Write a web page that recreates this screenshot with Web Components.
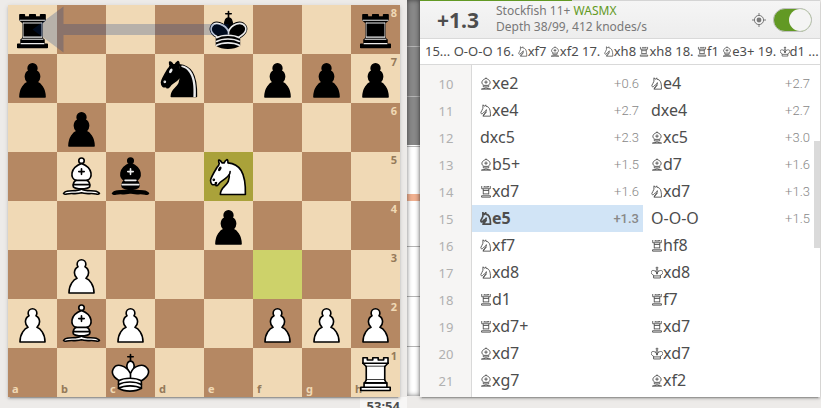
<!DOCTYPE html>
<html lang="en">
<head>
<meta charset="utf-8">
<meta name="viewport" content="width=device-width, initial-scale=1">
<title>Analysis board</title>
<style>
    html, body {
        margin: 0;
        height: 100%;
        overflow: hidden;
    }

    body {
        background: #edebe9;
        color: #4d4d4d;
        font-family: "Noto Sans", "DejaVu Sans", sans-serif;
    }
</style>
</head>
<body>
<analysis-page>
    <chess-board position="r3k2r/p2n1ppp/1p6/1Bb1N3/4p3/1P6/PBP2PPP/2K4R" origin="f3" target="e5" arrow="e8a8"></chess-board>
    <eval-gauge slot="gauge"></eval-gauge>
    <section slot="tools" aria-label="Analysis">
        <engine-header score="+1.3">
            Stockfish 11+ <span slot="tech">WASMX</span>
            <span slot="info">Depth 38/99, 412 knodes/s</span>
        </engine-header>
        <engine-line>15... O-O-O 16. Nxf7 Bxf2 17. Nxh8 Rxh8 18. Rf1 Be3+ 19. Kd1 ...</engine-line>
        <move-list current="15"></move-list>
    </section>
    <chess-clock slot="clock">53:54</chess-clock>
</analysis-page>

<script>
// Small line drawings of the pieces, used inside move text
const FIGURINES = {
    K: { name: 'King', path: 'M22.5 14V5M18.5 8.500h8M22.500 27c0-4 3-7 3-10 0-2-1-3.500-3-3.500s-3 1.500-3 3.500c0 3 3 6 3 10M12.500 38h20v-8c8-4 8-9 6-12-4-4-13-2-16 8-3-10-12-12-16-8-2 3-2 8 6 12zM12.500 32h20' },
    R: { name: 'Rook', path: 'M10 6v8h25V6M15 9h4V6M19 9h7V6M26 9h4V6M14.500 14v16M30.500 14v16M14 19h17M14 29h17M9.500 38.500h26v-4h-26z' },
    B: { name: 'Bishop', path: 'M22.500 4.500v3M16 27c-6-3-7-9-4-13 2-3 6-5 10.500-7 4.500 2 8.500 4 10.500 7 3 4 2 10-4 13M22.500 13v10M17.500 18h10M15 27.500h15M15 32h15l1-4M15 32l-1-4M9 38.500c5-3 10 0 13.500-4 3.500 4 8.500 1 13.500 4z' },
    N: { name: 'Knight', path: 'M22 9.500c10 1 14 9 13.500 29H14c0-9 10-8 9.500-19-1 4-4 6-8 8l-4 4c-3 1-4-1-4-4 2-4 4-7 6-12l0-10 5 4 3-4 1 4M14 38.500L24 26' }
};

// Swap piece letters for figurines, "O-O-O" stays as it is
function figurine(san) {
    return san.replace(/[KRBN]/g, letter => {
        const { name, path } = FIGURINES[letter];
        return `<svg class="fig" viewBox="5 3 35 38" role="img" aria-label="${name}"><path d="${path}"/></svg>`;
    });
}

const figurineStyle = `
    .fig {
        width: 12px;
        height: 13px;
        vertical-align: -1px;
        fill: none;
        stroke: currentColor;
        stroke-width: 2.6;
    }
`;

class AnalysisPage extends HTMLElement {
    constructor() {
        super();
        this.attachShadow({ mode: 'open' }).innerHTML = `
            <style>
                :host {
                    display: grid;
                    grid-template-columns: minmax(0, 49fr) 7px 13px minmax(0, 50fr);
                    padding: 0 1px 0 8px;
                }
                .board { padding-top: 5px; }
                .gauge { grid-column: 3; display: grid; padding-bottom: 1px; }
                .tools {
                    border-top: 1px solid #c4cbb9;
                    border-image: linear-gradient(90deg, #629924 38%, #d4d4d4 38%) 1;
                    background: #fff;
                    box-shadow: 0 2px 2px rgba(0,0,0,.14), 0 3px 1px -2px rgba(0,0,0,.2), 0 1px 5px rgba(0,0,0,.12);
                    z-index: 1;
                }
                .clock { grid-column: 1 / 3; justify-self: end; }
            </style>
            <main class="board"><slot></slot></main>
            <div class="gauge"><slot name="gauge"></slot></div>
            <div class="tools"><slot name="tools"></slot></div>
            <div class="clock"><slot name="clock"></slot></div>
        `;
    }
}

const PIECES = {
    P: `<path fill="#fff" stroke-linecap="round" d="M22.5 9c-2.21 0-4 1.79-4 4 0 .89.29 1.71.78 2.38C17.33 16.5 16 18.59 16 21c0 2.03.94 3.84 2.41 5.03-3 1.06-7.41 5.55-7.41 13.47h23c0-7.92-4.41-12.41-7.41-13.47 1.47-1.19 2.41-3 2.41-5.03 0-2.41-1.33-4.5-3.28-5.62.49-.67.78-1.49.78-2.38 0-2.21-1.79-4-4-4z"/>`,
    N: `<path fill="#fff" d="M22 10c10.5 1 16.5 8 16 29H15c0-9 10-6.5 8-21"/>
        <path fill="#fff" d="M24 18c.38 2.91-5.55 7.37-8 9-3 2-2.82 4.34-5 4-1.042-.94 1.41-3.04 0-3-1 0 .19 1.23-1 2-1 0-4.003 1-4-4 0-2 6-12 6-12s1.89-1.9 2-3.5c-.73-.994-.5-2-.5-3 1-1 3 2.5 3 2.5h2s.78-1.992 2.5-3c1 0 1 3 1 3"/>
        <path fill="#000" d="M9.5 25.5a.5.5 0 1 1-1 0 .5.5 0 1 1 1 0zm5.433-9.75a.5 1.5 30 1 1-.866-.5.5 1.5 30 1 1 .866.5z"/>`,
    n: `<path fill="#000" d="M22 10c10.5 1 16.5 8 16 29H15c0-9 10-6.5 8-21"/>
        <path fill="#000" d="M24 18c.38 2.91-5.55 7.37-8 9-3 2-2.82 4.34-5 4-1.042-.94 1.41-3.04 0-3-1 0 .19 1.23-1 2-1 0-4.003 1-4-4 0-2 6-12 6-12s1.89-1.9 2-3.5c-.73-.994-.5-2-.5-3 1-1 3 2.5 3 2.5h2s.78-1.992 2.5-3c1 0 1 3 1 3"/>
        <path fill="#ececec" stroke="#ececec" d="M9.5 25.5a.5.5 0 1 1-1 0 .5.5 0 1 1 1 0zm5.433-9.75a.5 1.5 30 1 1-.866-.5.5 1.5 30 1 1 .866.5z"/>
        <path fill="#ececec" stroke="none" d="M24.55 10.4l-.45 1.45.5.15c3.15 1 5.65 2.49 7.9 6.75S35.75 29.06 35.25 39l-.05.5h2.25l.05-.5c.5-10.06-.88-16.85-3.25-21.34-2.37-4.49-5.79-6.64-9.19-7.16l-.51-.1z"/>`,
    B: `<g fill="#fff">
            <path d="M9 36c3.39-.97 10.11.43 13.5-2 3.39 2.43 10.11 1.03 13.5 2 0 0 1.65.54 3 2-.68.97-1.65.99-3 .5-3.39-.97-10.11.46-13.5-1-3.39 1.46-10.11.03-13.5 1-1.354.49-2.323.47-3-.5 1.354-1.94 3-2 3-2z"/>
            <path d="M15 32c2.5 2.5 12.5 2.5 15 0 .5-1.5 0-2 0-2 0-2.5-2.5-4-2.5-4 5.5-1.5 6-11.5-5-15.5-11 4-10.5 14-5 15.5 0 0-2.5 1.5-2.5 4 0 0-.5.5 0 2z"/>
            <path d="M25 8a2.5 2.5 0 1 1-5 0 2.5 2.5 0 1 1 5 0z"/>
        </g>
        <path d="M17.5 26h10M15 30h15m-7.5-14.5v5M20 18h5"/>`,
    R: `<g fill="#fff">
            <path d="M9 39h27v-3H9v3zm3-3v-4h21v4H12zm-1-22V9h4v2h5V9h5v2h5V9h4v5"/>
            <path d="M34 14l-3 3H14l-3-3"/>
            <path d="M31 17v12.5H14V17"/>
            <path d="M31 29.5l1.5 2.5h-20l1.5-2.5"/>
            <path d="M11 14h23"/>
        </g>`,
    r: `<g fill="#000">
            <path d="M9 39h27v-3H9v3zm3.5-7l1.5-2.5h17l1.5 2.5h-20zm-.5 4v-4h21v4H12z"/>
            <path d="M14 29.5v-13h17v13H14z"/>
            <path d="M14 16.5L11 14h23l-3 2.5H14zM11 14V9h4v2h5V9h5v2h5V9h4v5H11z"/>
        </g>
        <path stroke="#ececec" stroke-width="1" d="M12 35.5h21m-20-4h19m-18-2h17m-17-13h17M11 14h23"/>
        <path stroke="#ececec" stroke-width=".6" d="M14 16.5v13M31 16.5v13"/>`,
    K: `<path d="M22.5 11.63V6M20 8h5"/>
        <path fill="#fff" d="M22.5 25s4.5-7.5 3-10.5c0 0-1-2.5-3-2.5s-3 2.5-3 2.5c-1.5 3 3 10.5 3 10.5"/>
        <path fill="#fff" d="M11.5 37c5.5 3.5 15.5 3.5 21 0v-7s9-4.5 6-10.5c-4-6.5-13.5-3.5-16 4V27v-3.5c-3.5-7.5-13-10.5-16-4-3 6 5 10 5 10V37z"/>
        <path d="M11.5 30c5.5-3 15.5-3 21 0m-21 3.5c5.5-3 15.5-3 21 0m-21 3.5c5.5-3 15.5-3 21 0"/>`,
    k: `<path d="M22.5 11.63V6M20 8h5"/>
        <path fill="#000" d="M22.5 25s4.5-7.5 3-10.5c0 0-1-2.5-3-2.5s-3 2.5-3 2.5c-1.5 3 3 10.5 3 10.5"/>
        <path fill="#000" d="M11.5 37c5.5 3.5 15.5 3.5 21 0v-7s9-4.5 6-10.5c-4-6.5-13.5-3.5-16 4V27v-3.5c-3.5-7.5-13-10.5-16-4-3 6 5 10 5 10V37z"/>
        <path stroke="#ececec" d="M32 29.5s8.5-4 6.03-9.65C34.15 14 25 18 22.5 24.5l.01 2.1-.01-2.1C20 18 9.906 14 6.997 19.85c-2.497 5.65 4.853 9 4.853 9"/>
        <path stroke="#ececec" d="M11.5 30c5.5-3 15.5-3 21 0m-21 3.5c5.5-3 15.5-3 21 0m-21 3.5c5.5-3 15.5-3 21 0"/>`
};
PIECES.p = PIECES.P.replace('#fff', '#000');
PIECES.b = PIECES.B.replace('#fff', '#000').replace('<path d="M17.5', '<path stroke="#ececec" d="M17.5');

class ChessPiece extends HTMLElement {
    constructor() {
        super();
        this.attachShadow({ mode: 'open' });
    }

    connectedCallback() {
        this.shadowRoot.innerHTML = `
            <style>
                :host { display: block; grid-area: 1 / 1; z-index: 1; }
                svg { display: block; width: 100%; height: 100%; }
            </style>
            <svg viewBox="0 0 45 45" fill="none" stroke="#000" stroke-width="1.5" stroke-linejoin="round" stroke-linecap="round" aria-hidden="true">
                ${PIECES[this.getAttribute('type')]}
            </svg>
        `;
    }
}

class ChessBoard extends HTMLElement {
    constructor() {
        super();
        this.attachShadow({ mode: 'open' });
    }

    connectedCallback() {
        this.shadowRoot.innerHTML = `
            <style>
                :host {
                    display: block;
                    position: relative;
                    box-shadow: 0 2px 2px rgba(0,0,0,.14), 0 3px 1px -2px rgba(0,0,0,.2), 0 1px 5px rgba(0,0,0,.12);
                }
                .squares {
                    display: grid;
                    grid-template: repeat(8, minmax(0, 1fr)) / repeat(8, minmax(0, 1fr));
                    aspect-ratio: 1;
                }
                .square {
                    display: grid;
                    grid-template: minmax(0, 1fr) / minmax(0, 1fr);
                    background: #f0d9b5;
                    color: #957a5a;
                    font-size: 11px;
                    font-weight: 700;
                    line-height: 14px;
                }
                .square.dark { background: #b58863; color: #f0d9b5; }
                .square.origin { background: #cdd26a; }
                .square.target { background: #aaa23a; }
                .rank { grid-area: 1 / 1; place-self: start end; padding: 1px 3px; }
                .file { grid-area: 1 / 1; place-self: end start; padding: 1px 4px; }
                .arrow {
                    position: absolute;
                    inset: 0;
                    z-index: 2;
                    opacity: .23;
                    pointer-events: none;
                }
            </style>
            <div class="squares">${this.squares()}</div>
            ${this.arrow()}
        `;
    }

    squares() {
        const rows = this.getAttribute('position').replace(/\d/g, n => ' '.repeat(n)).split('/');
        return rows.map((row, y) => [...row].map((type, x) => {
            const key = 'abcdefgh'[x] + (8 - y);
            const classes = ['square'];
            if ((x + y) % 2) classes.push('dark');
            if (key === this.getAttribute('origin')) classes.push('origin');
            if (key === this.getAttribute('target')) classes.push('target');
            return `
                <div class="${classes.join(' ')}">
                    ${x === 7 ? `<span class="rank">${8 - y}</span>` : ''}
                    ${y === 7 ? `<span class="file">${key[0]}</span>` : ''}
                    ${type !== ' ' ? `<chess-piece type="${type}"></chess-piece>` : ''}
                </div>`;
        }).join('')).join('');
    }

    // Drawn along the x axis from the target square, then turned towards the origin
    arrow() {
        const [x1, y1, x2, y2] = [...this.getAttribute('arrow')].map((c, i) =>
            i % 2 ? (8 - c) * 49 + 24.5 : 'abcdefgh'.indexOf(c) * 49 + 24.5);
        const length = Math.hypot(x1 - x2, y1 - y2);
        const angle = Math.atan2(y1 - y2, x1 - x2) * 180 / Math.PI;
        return `
            <svg class="arrow" viewBox="0 0 392 392" aria-hidden="true">
                <path fill="#003088" transform="translate(${x2} ${y2}) rotate(${angle})" d="M0 0L31-23V-5.5H${length}V5.5H31V23z"/>
            </svg>`;
    }
}

class EvalGauge extends HTMLElement {
    constructor() {
        super();
        this.attachShadow({ mode: 'open' }).innerHTML = `
            <style>
                :host {
                    display: grid;
                    grid-template-rows: 47fr 50fr 50fr 54fr 46fr 50fr 50fr 49fr;
                    position: relative;
                    background: linear-gradient(#888 36.7%, #fff 36.7%);
                }
                :host::after {
                    content: "";
                    position: absolute;
                    inset: 0;
                    box-shadow: inset 0 0 5px rgba(0,0,0,.55);
                }
                i { border-bottom: 1px solid #b5b5b5; }
                i:last-child { border: 0; }
                .zero { border-bottom: 7px solid #f0b090; }
            </style>
            <i></i><i></i><i></i><i class="zero"></i><i></i><i></i><i></i><i></i>
        `;
    }
}

class EngineHeader extends HTMLElement {
    constructor() {
        super();
        this.attachShadow({ mode: 'open' });
    }

    connectedCallback() {
        this.shadowRoot.innerHTML = `
            <style>
                :host {
                    display: flex;
                    align-items: center;
                    padding: 0 8px 0 17px;
                    height: 37px;
                    border-bottom: 1px solid #d9d9d9;
                    background: linear-gradient(#f5f5f5, #ededed);
                }
                .score { width: 59px; font-size: 21px; }
                .engine {
                    flex: 1;
                    padding-bottom: 2px;
                    color: #787878;
                    font-size: 12px;
                    line-height: 16px;
                    white-space: nowrap;
                }
                .info { display: block; }
                ::slotted([slot=tech]) { color: #629924; }
                button {
                    display: flex;
                    margin: 0 7px 0 0;
                    padding: 0;
                    border: 0;
                    background: none;
                    color: #787878;
                }
                input {
                    appearance: none;
                    display: flex;
                    justify-content: flex-end;
                    box-sizing: border-box;
                    width: 39px;
                    height: 24px;
                    margin: 0;
                    border: 1px solid #c0c0c0;
                    border-radius: 12px;
                    background: #d0d0d0;
                }
                input:checked { background: #629924; }
                input::before {
                    content: "";
                    width: 22px;
                    height: 22px;
                    border-radius: 50%;
                    background: #f4f4f4;
                }
            </style>
            <strong class="score">${this.getAttribute('score')}</strong>
            <div class="engine">
                <slot></slot><slot name="tech"></slot>
                <span class="info"><slot name="info"></slot></span>
            </div>
            <button type="button" aria-label="Show threat">
                <svg width="14" height="14" viewBox="0 0 14 14" fill="none" stroke="currentColor" aria-hidden="true">
                    <circle cx="7" cy="7" r="4.6"/>
                    <circle cx="7" cy="7" r="2.4" fill="currentColor" stroke="none"/>
                    <path d="M7 0v3M7 11v3M0 7h3M11 7h3"/>
                </svg>
            </button>
            <input type="checkbox" role="switch" aria-label="Toggle local evaluation" checked>
        `;
    }
}

class EngineLine extends HTMLElement {
    constructor() {
        super();
        this.attachShadow({ mode: 'open' });
    }

    connectedCallback() {
        this.shadowRoot.innerHTML = `
            <style>
                :host {
                    display: block;
                    padding: 0 5px;
                    border-bottom: 1px solid #d9d9d9;
                    font-size: 13px;
                    line-height: 25px;
                    white-space: nowrap;
                    overflow: hidden;
                }
                ${figurineStyle}
                .fig { width: 10px; height: 11px; }
            </style>
            ${figurine(this.textContent)}
        `;
    }
}

class MoveList extends HTMLElement {
    constructor() {
        super();
        this.attachShadow({ mode: 'open' });
    }

    connectedCallback() {
        const moves = [
            [10, 'Bxe2', '+0.6', 'Ne4', '+2.7'],
            [11, 'Nxe4', '+2.7', 'dxe4', '+2.7'],
            [12, 'dxc5', '+2.3', 'Bxc5', '+3.0'],
            [13, 'Bb5+', '+1.5', 'Bd7', '+1.6'],
            [14, 'Rxd7', '+1.6', 'Nxd7', '+1.3'],
            [15, 'Ne5', '+1.3', 'O-O-O', '+1.5'],
            [16, 'Nxf7', '', 'Rhf8', ''],
            [17, 'Nxd8', '', 'Kxd8', ''],
            [18, 'Rd1', '', 'Rf7', ''],
            [19, 'Rxd7+', '', 'Rxd7', ''],
            [20, 'Bxd7', '', 'Kxd7', ''],
            [21, 'Bxg7', '', 'Bxf2', '']
        ];
        const current = Number(this.getAttribute('current'));

        this.shadowRoot.innerHTML = `
            <style>
                :host {
                    display: grid;
                    grid-template-columns: 52px minmax(0, 1fr) 6px;
                }
                .gutter {
                    grid-area: 1 / 1;
                    background: #f6f5f4;
                    border-right: 1px solid #d9d9d9;
                }
                table {
                    grid-area: 1 / 1 / 2 / 3;
                    width: 100%;
                    margin: 5px 0 3px;
                    border-collapse: collapse;
                    table-layout: fixed;
                    z-index: 1;
                }
                .number { width: 52px; }
                th, td { height: 27px; padding: 0; }
                th {
                    color: #b0b0b0;
                    font-size: 13px;
                    font-weight: 400;
                }
                .move {
                    display: flex;
                    align-items: center;
                    justify-content: space-between;
                    padding: 0 4px 0 8px;
                    font-size: 16px;
                    line-height: 27px;
                }
                .eval {
                    color: #888;
                    font-family: Roboto, sans-serif;
                    font-size: 13px;
                    font-weight: 300;
                }
                ${figurineStyle}
                .active { background: #d1e4f6; font-weight: 700; }
                .active .eval { font-weight: 500; }
                .active .fig { stroke-width: 5; }
                .track { grid-column: 3; display: grid; grid-template-rows: 76fr 107fr 149fr; }
                .thumb { grid-row: 2; background: #dadada; }
            </style>
            <div class="gutter"></div>
            <table aria-label="Moves">
                <colgroup><col class="number"><col><col></colgroup>
                <tbody>
                    ${moves.map(([n, white, whiteEval, black, blackEval]) => `
                        <tr>
                            <th scope="row">${n}</th>
                            ${this.cell(white, whiteEval, n === current)}
                            ${this.cell(black, blackEval, false)}
                        </tr>
                    `).join('')}
                </tbody>
            </table>
            <div class="track"><div class="thumb"></div></div>
        `;
    }

    cell(san, score, active) {
        return `
            <td class="${active ? 'active' : ''}" ${active ? 'aria-current="true"' : ''}>
                <div class="move">
                    <span>${figurine(san)}</span>
                    ${score ? `<span class="eval">${score}</span>` : ''}
                </div>
            </td>`;
    }
}

class ChessClock extends HTMLElement {
    constructor() {
        super();
        this.attachShadow({ mode: 'open' }).innerHTML = `
            <style>
                :host {
                    display: block;
                    padding: 0 7px;
                    background: #f7f6f5;
                    font-size: 13px;
                    font-weight: 700;
                    line-height: 18px;
                }
            </style>
            <slot></slot>
        `;
    }
}

customElements.define('analysis-page', AnalysisPage);
customElements.define('chess-piece', ChessPiece);
customElements.define('chess-board', ChessBoard);
customElements.define('eval-gauge', EvalGauge);
customElements.define('engine-header', EngineHeader);
customElements.define('engine-line', EngineLine);
customElements.define('move-list', MoveList);
customElements.define('chess-clock', ChessClock);
</script>
</body>
</html>
